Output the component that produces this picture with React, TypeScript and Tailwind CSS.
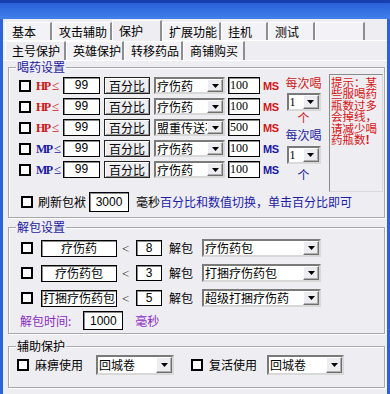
import React from "react";

const Check = () => (
  <span className="block w-[12px] h-[12px] shrink-0 bg-white border-2 border-black" />
);

function Arrow() {
  return (
    <span className="flex items-center justify-center w-[16px] h-full shrink-0 bg-[#EDECF0] border border-t-white border-l-white border-r-[#6f6f6f] border-b-[#6f6f6f] shadow-[inset_-1px_-1px_0_#b0b0b0]">
      <svg width="7" height="4" viewBox="0 0 7 4">
        <path d="M0 0h7L3.5 4z" fill="#000" />
      </svg>
    </span>
  );
}

function Sel({
  className,
  text,
  textClass = "",
}: {
  className: string;
  text: string;
  textClass?: string;
}) {
  return (
    <div
      className={`flex shrink-0 bg-white border-2 border-t-[#7a7a7a] border-l-[#7a7a7a] border-r-[#d8d8d8] border-b-[#d8d8d8] overflow-hidden ${className}`}
    >
      <span
        className={`flex-1 min-w-0 flex items-center overflow-hidden whitespace-nowrap pl-[1px] text-[12px] leading-[12px] text-black ${textClass}`}
      >
        {text}
      </span>
      <Arrow />
    </div>
  );
}

function Inp({ className, children }: { className: string; children: React.ReactNode }) {
  return (
    <div
      className={`flex items-center shrink-0 bg-white border border-black shadow-[inset_1px_1px_0_#8a8a8a] ${className}`}
    >
      {children}
    </div>
  );
}

function Group({
  title,
  titleClass,
  className,
  children,
}: {
  title: string;
  titleClass: string;
  className: string;
  children: React.ReactNode;
}) {
  return (
    <div
      className={`relative border border-[#A9A8AD] shadow-[inset_1px_1px_0_#ffffff,1px_1px_0_#ffffff] ${className}`}
    >
      <span
        className={`absolute left-[7px] top-[-7px] px-[1px] bg-[#EEEDF2] text-[12px] leading-[12px] ${titleClass}`}
      >
        {title}
      </span>
      {children}
    </div>
  );
}

const HPRow = ({
  kind,
  med,
  ms,
}: {
  kind: "HP" | "MP";
  med: string;
  ms: string;
}) => {
  const red = kind === "HP";
  return (
    <div className="flex items-center h-[17px]">
      <Check />
      <span
        className={`ml-[5px] w-[22px] flex items-center leading-[12px] font-bold font-['Liberation_Serif',serif] ${
          red ? "text-[#D01818]" : "text-[#1A1AA0]"
        }`}
      >
        <span className="text-[12px] tracking-[-1.5px]">{kind}</span>
        <span className="ml-[2px] font-normal text-[13px]">≤</span>
      </span>
      <Inp className="ml-[5px] w-[37px] h-[17px] justify-center">
        <span className="text-[12px] leading-[13px] font-['Liberation_Sans',sans-serif]">99</span>
      </Inp>
      <div className="ml-[4px] w-[46px] h-[17px] shrink-0 flex items-center justify-center border border-[#222] bg-[#EEEDF2] shadow-[inset_1px_1px_0_#ffffff,inset_-1px_-1px_0_#9a9a9a] text-[12px] leading-[12px]">
        百分比
      </div>
      <Sel className="ml-[4px] w-[71px] h-[17px]" text={med} />
      <Inp className="ml-[3px] w-[32px] h-[17px]">
        <span className="pl-[1px] text-[12px] leading-[13px] font-['Liberation_Serif',serif]">
          {ms}
        </span>
      </Inp>
      <span
        className={`ml-[3px] text-[11px] leading-[12px] font-bold tracking-[-0.5px] font-['Liberation_Sans',sans-serif] ${
          red ? "text-[#D01818]" : "text-[#1A1AA0]"
        }`}
      >
        MS
      </span>
    </div>
  );
};

const UnpackRow = ({ name, n, sel }: { name: string; n: string; sel: string }) => (
  <div className="flex items-center h-[18px]">
    <Check />
    <div className="ml-[8px] w-[76px] h-[17px] shrink-0 flex items-center justify-center bg-white border border-black shadow-[inset_1px_1px_0_#8a8a8a] text-[12px] leading-[12px] whitespace-nowrap">
      {name}
    </div>
    <span className="ml-[5px] w-[10px] text-[13px] leading-[13px] text-[#333] font-['Liberation_Serif',serif]">
      &lt;
    </span>
    <Inp className="ml-[4px] w-[26px] h-[16px] justify-center">
      <span className="text-[12px] leading-[12px] font-['Liberation_Sans',sans-serif]">{n}</span>
    </Inp>
    <span className="ml-[7px] text-[12px] leading-[12px]">解包</span>
    <Sel className="ml-[9px] w-[119px] h-[18px]" text={sel} />
  </div>
);

const Tab = ({
  label,
  className,
  active = false,
}: {
  label: string;
  className: string;
  active?: boolean;
}) => (
  <div
    className={`shrink-0 flex items-center pl-[6px] text-[12px] leading-[12px] text-black border-l border-t border-l-white border-t-white border-r-2 border-r-[#8E8D92] ${
      active ? "bg-[#EEEDF2] h-[21px] -mt-[2px] relative z-10" : "bg-[#F3F2F6] h-[18px]"
    } ${className}`}
  >
    {label}
  </div>
);

export default function App() {
  return (
    <div className="w-[390px] h-[394px] overflow-hidden bg-[#EEEDF2] flex flex-col font-['Noto_Sans_CJK_SC','Noto_Sans',sans-serif] text-black">
      <div className="h-[19px] shrink-0 border-t-[3px] border-[#1740AE] bg-gradient-to-b from-[#2A60D8] to-[#4180EA]" />
      <div className="flex-1 flex flex-col border-x-[3px] border-[#2D63D8]">
        <div className="h-[3px] shrink-0" />
        {/* tab row 1 */}
        <div className="flex items-start h-[19px] shrink-0 pl-[2px] border-b border-white">
          <Tab label="基本" className="w-[47px]" />
          <Tab label="攻击辅助" className="w-[60px]" />
          <Tab label="保护" className="w-[50px]" active />
          <Tab label="扩展功能" className="w-[59px]" />
          <Tab label="挂机" className="w-[47px]" />
          <Tab label="测试" className="w-[47px]" />
          <Tab label="" className="w-[50px]" />
        </div>
        {/* tab row 2 */}
        <div className="flex items-start h-[20px] shrink-0 pl-[2px] border-b border-white">
          <Tab label="主号保护" className="w-[61px] !h-[19px] !mt-0" active />
          <Tab label="英雄保护" className="w-[58px] !h-[19px]" />
          <Tab label="转移药品" className="w-[59px] !h-[19px]" />
          <Tab label="商铺购买" className="w-[62px] !h-[19px]" />
        </div>

        {/* group 1 */}
        <Group
          title="喝药设置"
          titleClass="text-[#1C1CA0]"
          className="mt-[6px] ml-[5px] mr-[2px] h-[151px] shrink-0"
        >
          <div className="flex h-[118px] mt-[6px]">
            <div className="flex flex-col gap-[4px] mt-[3px] pl-[10px]">
              <HPRow kind="HP" med="疗伤药" ms="100" />
              <HPRow kind="HP" med="疗伤药" ms="100" />
              <HPRow kind="HP" med="盟重传送石" ms="500" />
              <HPRow kind="MP" med="疗伤药" ms="100" />
              <HPRow kind="MP" med="疗伤药" ms="100" />
            </div>
            <div className="ml-[7px] mt-[3px] w-[36px] flex flex-col items-center text-[12px] leading-[12px]">
              <span className="text-[#D01818]">每次喝</span>
              <Sel
                className="mt-[4px] w-[34px] h-[18px]"
                text="1"
                textClass="font-['Liberation_Serif',serif]"
              />
              <span className="mt-[1px] text-[#D01818]">个</span>
              <span className="mt-[5px] text-[#1C1CA0]">每次喝</span>
              <Sel
                className="mt-[5px] w-[34px] h-[18px]"
                text="1"
                textClass="font-['Liberation_Serif',serif]"
              />
              <span className="mt-[5px] text-[#1C1CA0]">个</span>
            </div>
            <div className="ml-auto mr-[1px] w-[54px] h-[118px] border border-t-[#8a8a8a] border-l-[#8a8a8a] border-r-[#dadada] border-b-[#dadada] pt-[2px] pl-[1px] text-[11.5px] leading-[11.4px] text-[#D81414]">
              <div>提示：某</div>
              <div>些服喝药</div>
              <div>瓶数过多</div>
              <div>会掉线，</div>
              <div>请减少喝</div>
              <div>
                药瓶数<span className="font-bold">!</span>
              </div>
            </div>
          </div>
          <div className="flex items-center h-[20px] pl-[12px] text-[12px] leading-[12px]">
            <Check />
            <span className="ml-[5px]">刷新包袱</span>
            <Inp className="ml-[3px] w-[40px] h-[20px] justify-center">
              <span className="text-[12px] leading-[12px] font-['Liberation_Sans',sans-serif]">
                3000
              </span>
            </Inp>
            <span className="ml-[7px]">毫秒</span>
            <span className="text-[#1C1CA8] whitespace-nowrap">百分比和数值切换，单击百分比即可</span>
          </div>
        </Group>

        {/* group 2 */}
        <Group
          title="解包设置"
          titleClass="text-[#1C1CA0]"
          className="mt-[9px] ml-[5px] mr-[2px] h-[107px] shrink-0"
        >
          <div className="flex flex-col pl-[12px] pt-[11px]">
            <UnpackRow name="疗伤药" n="8" sel="疗伤药包" />
            <div className="h-[7px]" />
            <UnpackRow name="疗伤药包" n="3" sel="打捆疗伤药包" />
            <div className="h-[7px]" />
            <UnpackRow name="打捆疗伤药包" n="5" sel="超级打捆疗伤药" />
            <div className="flex items-center mt-[4px] h-[19px] text-[12px] leading-[12px] text-[#8A2BC2]">
              <span className="-ml-[1px]">解包时间:</span>
              <Inp className="ml-[12px] w-[40px] h-[19px] justify-center">
                <span className="text-[12px] leading-[12px] text-black font-['Liberation_Sans',sans-serif]">
                  1000
                </span>
              </Inp>
              <span className="ml-[12px]">毫秒</span>
            </div>
          </div>
        </Group>

        {/* group 3 */}
        <Group
          title="辅助保护"
          titleClass="text-black"
          className="mt-[12px] ml-[5px] mr-[2px] h-[42px] shrink-0"
        >
          <div className="flex items-center h-[20px] mt-[8px] pl-[8px] text-[12px] leading-[12px]">
            <Check />
            <span className="ml-[6px]">麻痹使用</span>
            <Sel className="ml-[13px] w-[78px] h-[20px]" text="回城卷" />
            <span className="ml-[17px]">
              <Check />
            </span>
            <span className="ml-[6px]">复活使用</span>
            <Sel className="ml-[10px] w-[77px] h-[20px]" text="回城卷" />
          </div>
        </Group>
      </div>
    </div>
  );
}
